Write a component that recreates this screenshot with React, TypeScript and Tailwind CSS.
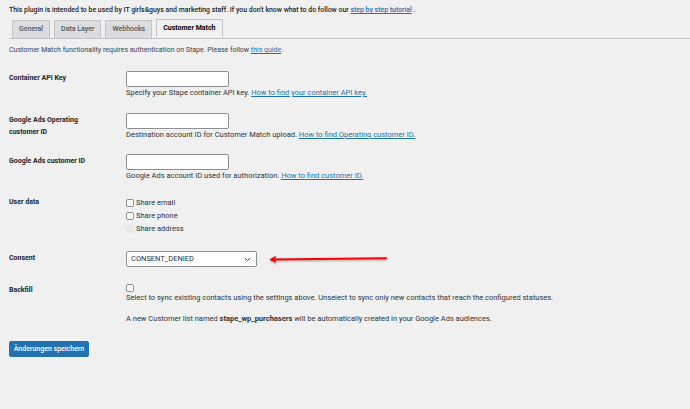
function Label({ children, className = '' }: { children: React.ReactNode; className?: string }) {
  return <div className={`font-bold text-[7px] text-[#1d2327] ${className}`}>{children}</div>;
}

function Link({ children }: { children: React.ReactNode }) {
  return <a className="text-[#2271b1] underline cursor-pointer">{children}</a>;
}

function Checkbox({ label, disabled }: { label: string; disabled?: boolean }) {
  return (
    <label className="flex items-center gap-[2px] h-[13px]">
      <span
        className={
          disabled
            ? 'w-[8px] h-[8px] rounded-[2px] bg-[#e8e8e8]'
            : 'w-[8px] h-[8px] rounded-[2px] border border-[#8c8f94] bg-white'
        }
      />
      <span className="text-[#2c3338]">{label}</span>
    </label>
  );
}

function Input() {
  return <div className="w-[103px] h-[16px] bg-white border border-[#8c8f94] rounded-[2px]" />;
}

export default function App() {
  const tabs = ['General', 'Data Layer', 'Webhooks', 'Customer Match'];

  return (
    <div className="w-[690px] min-h-[409px] bg-[#f0f0f0] font-['Roboto',sans-serif] text-[7.5px] text-[#1d2327] px-[9px] pt-[6px]">
      <p className="font-medium text-[6.93px] leading-[9px]">
        This plugin is intended to be used by IT girls&amp;guys and marketing staff. If you don't know what to do
        follow our <Link>step by step tutorial</Link> .
      </p>

      <div className="flex gap-[4px] pl-[3px] mt-[4px] border-b border-[#c3c4c7] -mr-[9px] text-[7px]">
        {tabs.map((t, i) => (
          <div
            key={t}
            className={
              i === 3
                ? 'h-[19px] px-[6px] flex items-center font-bold text-[#000] bg-[#f0f0f0] border border-[#c3c4c7] border-b-[#f0f0f0] -mb-[1px]'
                : 'h-[18px] mt-[1px] px-[6px] flex items-center font-medium text-[#50575e] bg-[#dcdcde] border border-b-0 border-[#c3c4c7]'
            }
          >
            {t}
          </div>
        ))}
      </div>

      <p className="mt-[7px] leading-[9px] text-[7px] text-[#3c434a]">
        Customer Match functionality requires authentication on Stape. Please follow <Link>this guide</Link>.
      </p>

      <div className="grid grid-cols-[117px_1fr] items-start mt-[16px]">
        <Label className="pt-[2px] leading-[11px]">Container API Key</Label>
        <div>
          <Input />
          <p className="mt-[1px] leading-[9px] text-[#2c3338]">
            Specify your Stape container API key. <Link>How to find your container API key.</Link>
          </p>
        </div>
      </div>

      <div className="grid grid-cols-[117px_1fr] items-start mt-[16px]">
        <Label className="pt-[1px] leading-[12px]">
          Google Ads Operating
          <br />
          customer ID
        </Label>
        <div>
          <Input />
          <p className="mt-[1px] leading-[9px] text-[#2c3338]">
            Destination account ID for Customer Match upload. <Link>How to find Operating customer ID.</Link>
          </p>
        </div>
      </div>

      <div className="grid grid-cols-[117px_1fr] items-start mt-[15px]">
        <Label className="pt-[2px] leading-[11px]">Google Ads customer ID</Label>
        <div>
          <Input />
          <p className="mt-[1px] leading-[9px] text-[#2c3338]">
            Google Ads account ID used for authorization. <Link>How to find customer ID.</Link>
          </p>
        </div>
      </div>

      <div className="grid grid-cols-[117px_1fr] items-start mt-[16px]">
        <Label className="pt-[1px] leading-[11px]">User data</Label>
        <div className="flex flex-col">
          <Checkbox label="Share email" />
          <Checkbox label="Share phone" />
          <Checkbox label="Share address" disabled />
        </div>
      </div>

      <div className="grid grid-cols-[117px_1fr] items-start mt-[16px]">
        <Label className="pt-[2px] leading-[11px]">Consent</Label>
        <div className="flex items-center">
          <div className="w-[131px] h-[16px] bg-white border border-[#8c8f94] rounded-[2px] flex items-center justify-between pl-[4px] pr-[5px] text-[#2c3338]">
            <span>CONSENT_DENIED</span>
            <svg width="7" height="5" viewBox="0 0 7 5" fill="none">
              <path d="M1 1.2L3.5 3.6L6 1.2" stroke="#3c434a" strokeWidth="1" />
            </svg>
          </div>
          <svg
            width="122"
            height="10"
            viewBox="0 0 122 10"
            className="ml-[11px] drop-shadow-[0_1px_1px_rgba(0,0,0,0.35)]"
          >
            <path d="M4 5.5L118 4.2" stroke="#ff0000" strokeWidth="2" strokeLinecap="round" />
            <path d="M1.5 5.6L8 1.8L7 5.5L8 9.2Z" fill="#ff0000" />
          </svg>
        </div>
      </div>

      <div className="grid grid-cols-[117px_1fr] items-start mt-[17px]">
        <Label className="pt-[1px] leading-[11px]">Backfill</Label>
        <div>
          <span className="block w-[8px] h-[8px] rounded-[2px] border border-[#8c8f94] bg-white" />
          <p className="mt-[1px] leading-[9px] text-[#2c3338]">
            Select to sync existing contacts using the settings above. Unselect to sync only new contacts that reach the
            configured statuses.
          </p>
          <p className="mt-[12px] leading-[9px] text-[#2c3338]">
            A new Customer list named <b>stape_wp_purchasers</b> will be automatically created in your Google Ads
            audiences.
          </p>
        </div>
      </div>

      <button className="mt-[18px] h-[16px] w-[80px] bg-[#2271b1] text-white rounded-[2px] border border-[#2271b1] text-[7px] font-medium leading-none">
        Änderungen speichern
      </button>
    </div>
  );
}
